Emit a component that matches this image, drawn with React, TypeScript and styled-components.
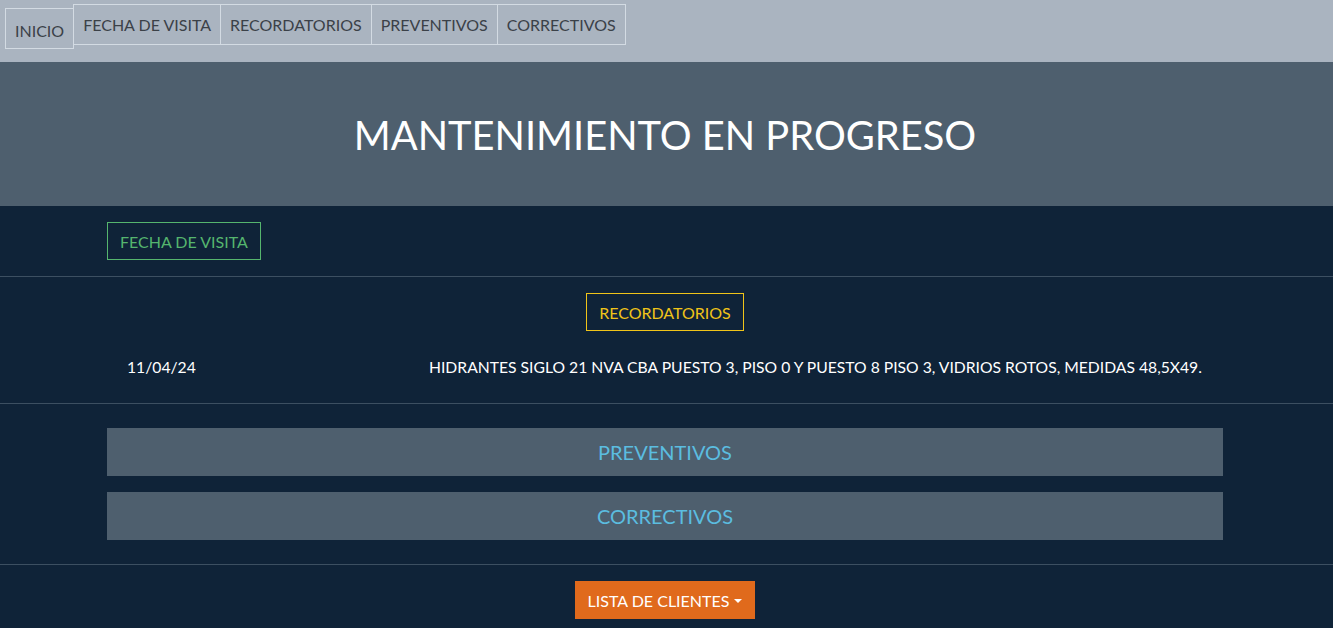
import React from "react";
import styled, { createGlobalStyle } from "styled-components";

const Global = createGlobalStyle`
  html, body { margin: 0; padding: 0; background: #0f2338; }
  body { font-family: Lato, "Open Sans", "Liberation Sans", sans-serif; }
  * { box-sizing: border-box; }
`;

const Page = styled.div`
  min-height: 628px;
  background: #0f2338;
`;

const Nav = styled.nav`
  height: 62px;
  background: #aab4c0;
  display: flex;
  align-items: flex-start;
  padding: 4px 0 0 5px;
`;

const Tab = styled.button<{ $active?: boolean }>`
  font-family: inherit;
  font-size: 16px;
  color: #3b4148;
  background: transparent;
  border: 1px solid #d3dbe3;
  margin-left: ${(p) => (p.$active ? "0" : "-1px")};
  height: 41px;
  padding: ${(p) => (p.$active ? "4px 9px 0" : "0 9px")};
  margin-top: ${(p) => (p.$active ? "4px" : "0")};
  cursor: pointer;
  white-space: nowrap;
`;

const Hero = styled.header`
  height: 144px;
  background: #4e5f6e;
  display: flex;
  align-items: center;
  justify-content: center;
`;

const Title = styled.h1`
  margin: 0 3px 0 0;
  color: #fff;
  font-weight: 400;
  font-size: 39.8px;
  padding-top: 1px;
`;

const Section = styled.section<{ $pad?: string; $last?: boolean }>`
  border-bottom: ${(p) => (p.$last ? "none" : "1px solid #3c4f61")};
  padding: ${(p) => p.$pad || "16px 0"};
  display: flex;
  flex-direction: column;
  align-items: center;
`;

const Container = styled.div<{ $center?: boolean; $gap?: number }>`
  width: 1116px;
  margin-right: 3px;
  display: flex;
  flex-direction: column;
  align-items: ${(p) => (p.$center ? "center" : "flex-start")};
  gap: ${(p) => p.$gap || 0}px;
`;

const OutlineBtn = styled.button<{ $color: string }>`
  font-family: inherit;
  font-size: 16px;
  color: ${(p) => p.$color};
  border: 1px solid ${(p) => p.$color};
  background: transparent;
  height: 38px;
  padding: 0 12px;
  cursor: pointer;
`;

const Row = styled.div`
  width: 100%;
  display: grid;
  grid-template-columns: 302px 1fr;
  color: #fff;
  font-size: 15.7px;
  padding: 25px 0 25px;
`;

const Cell = styled.div`
  padding: 0 20px;
  line-height: 22px;
  white-space: nowrap;
`;

const Bar = styled.div`
  width: 100%;
  height: 48px;
  background: #4e5f6e;
  color: #5bbde0;
  font-size: 20px;
  display: flex;
  align-items: center;
  justify-content: center;
`;

const Dropdown = styled.button`
  font-family: inherit;
  font-size: 16px;
  color: #fff;
  background: #e06a1c;
  border: none;
  height: 38px;
  padding: 0 13px;
  display: flex;
  align-items: center;
  gap: 5px;
  cursor: pointer;
`;

const Caret = styled.span`
  width: 0;
  height: 0;
  border-left: 4px solid transparent;
  border-right: 4px solid transparent;
  border-top: 4px solid #fff;
  margin-top: 1px;
`;

export default function App() {
  return (
    <Page>
      <Global />
      <Nav>
        <Tab $active>INICIO</Tab>
        <Tab>FECHA DE VISITA</Tab>
        <Tab>RECORDATORIOS</Tab>
        <Tab>PREVENTIVOS</Tab>
        <Tab>CORRECTIVOS</Tab>
      </Nav>
      <Hero>
        <Title>MANTENIMIENTO EN PROGRESO</Title>
      </Hero>
      <Section $pad="16px 0 16px">
        <Container>
          <OutlineBtn $color="#55b56e">FECHA DE VISITA</OutlineBtn>
        </Container>
      </Section>
      <Section $pad="16px 0 0">
        <Container $center>
          <OutlineBtn $color="#f0c419">RECORDATORIOS</OutlineBtn>
          <Row>
            <Cell>11/04/24</Cell>
            <Cell>
              HIDRANTES SIGLO 21 NVA CBA PUESTO 3, PISO 0 Y PUESTO 8 PISO 3,
              VIDRIOS ROTOS, MEDIDAS 48,5X49.
            </Cell>
          </Row>
        </Container>
      </Section>
      <Section $pad="24px 0 24px">
        <Container $gap={16}>
          <Bar>PREVENTIVOS</Bar>
          <Bar>CORRECTIVOS</Bar>
        </Container>
      </Section>
      <Section $pad="16px 0 9px" $last>
        <Container $center>
          <Dropdown>
            LISTA DE CLIENTES
            <Caret />
          </Dropdown>
        </Container>
      </Section>
    </Page>
  );
}
